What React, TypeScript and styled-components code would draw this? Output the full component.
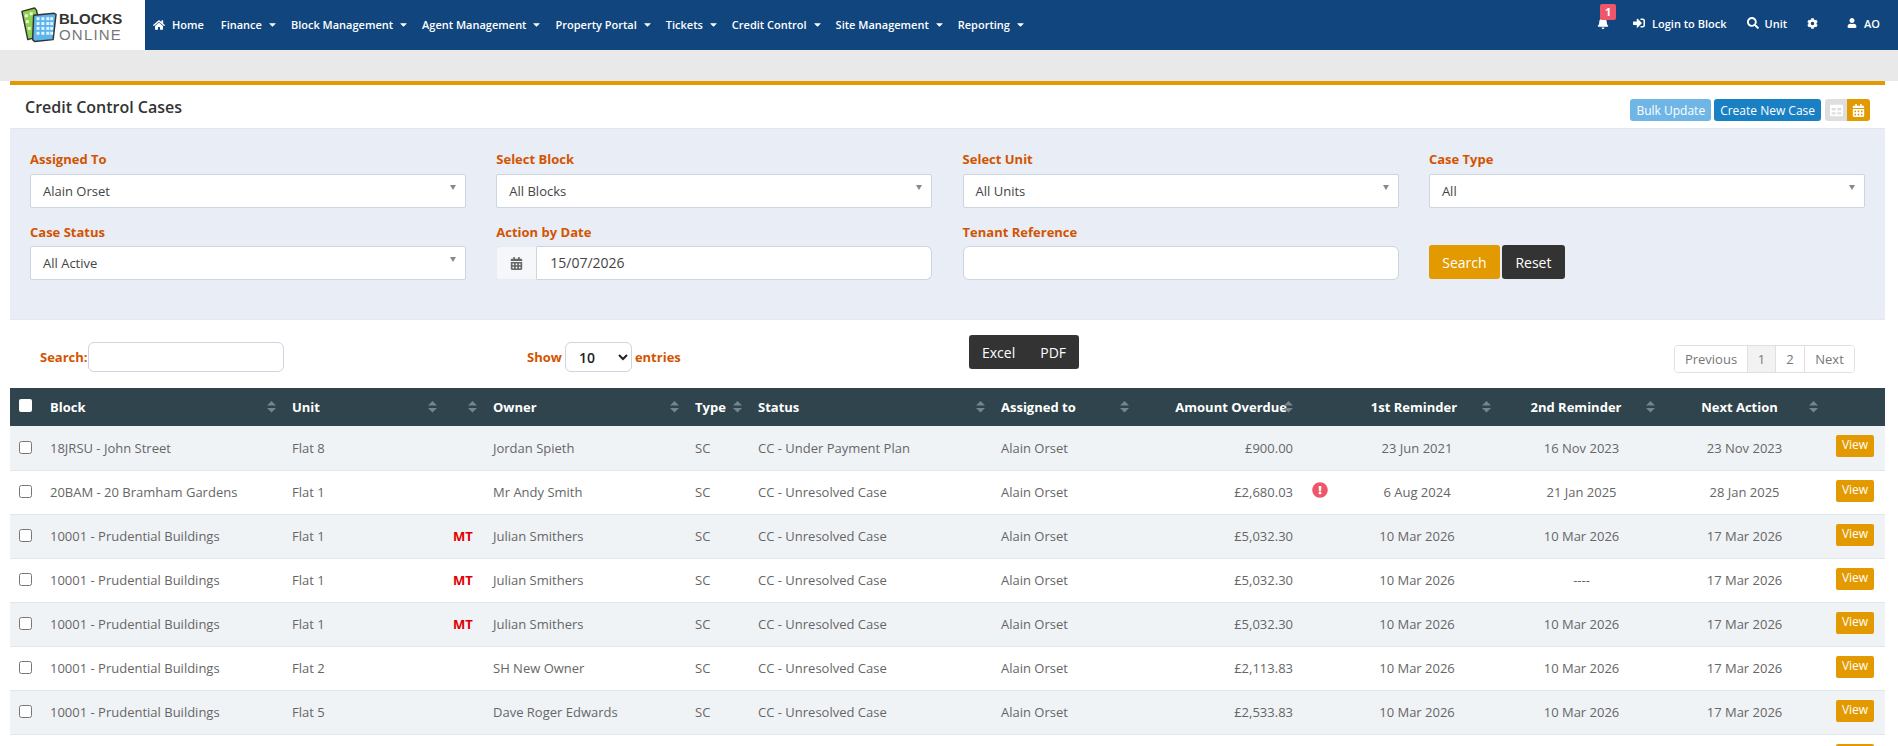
import React from "react";
import styled, { createGlobalStyle } from "styled-components";
import { FaHome, FaBell, FaSignInAlt, FaSearch, FaCog, FaUser, FaCaretDown, FaCalendarAlt, FaTable, FaExclamationCircle } from "react-icons/fa";

const Global = createGlobalStyle`
  html, body { margin: 0; padding: 0; height: 746px; overflow: hidden; background: #fff; }
  body { font-family: "Open Sans", "Noto Sans", sans-serif; font-size: 13px; color: #333; }
  * { box-sizing: border-box; }
`;

const TopBar = styled.header`
  display: flex; height: 50px; background: #10457d; color: #fff;
`;
const LogoBox = styled.div`
  width: 145px; height: 50px; background: #fff; display: flex; align-items: center; padding-left: 20px; gap: 1px; flex: none;
`;
const LogoWords = styled.div`
  display: flex; flex-direction: column; font-family: "Liberation Sans", Arial, sans-serif; color: #333; line-height: 16px; margin-top: 3px;
`;
const LogoStrong = styled.span`font-size: 15px; font-weight: 700; letter-spacing: 0;`;
const LogoLight = styled.span`font-size: 15px; font-weight: 400; letter-spacing: 1.2px; color: #777;`;
const MainNav = styled.nav`
  display: flex; align-items: center; gap: 13px; padding: 0 0 1px 8px; font-size: 11px; font-weight: 600; white-space: nowrap;
`;
const NavItem = styled.span<{ $gap?: number; $mr?: number }>`
  display: inline-flex; align-items: center; gap: ${p => p.$gap ?? 5}px; margin-right: ${p => p.$mr ?? 0}px;
`;
const SideNav = styled.div`
  margin-left: auto; display: flex; align-items: center; height: 46px; padding-right: 18px; font-size: 11px; font-weight: 600; white-space: nowrap;
`;
const SideItem = styled.span<{ $ml: number; $gap?: number }>`
  display: inline-flex; align-items: center; gap: ${p => p.$gap ?? 7}px; margin-left: ${p => p.$ml}px; position: relative;
`;
const Badge = styled.span`
  position: absolute; top: -13px; left: 3px; width: 16px; height: 16px; background: #f0566a; border-radius: 2px; font-size: 11px; font-weight: 700; text-align: center; line-height: 16px; color: #fff;
`;
const GreyBand = styled.div`height: 31px; background: #e9e9e9;`;
const Main = styled.main`
  width: 1875px; margin-left: 10px;
`;
const TitleRow = styled.div`
  height: 48px; border-top: 4px solid #e39a00; border-bottom: 1px solid #e6e6e6; display: flex; align-items: center; justify-content: space-between; padding: 0 15px; background: #fff;
`;
const Title = styled.h1`
  margin: 1px 0 0; font-size: 16px; font-weight: 600; color: #333;
`;
const TitleActions = styled.div`display: flex; align-items: center; gap: 3px; margin-top: 7px;`;
const SmallBtn = styled.button<{ $bg: string }>`
  height: 22px; border: 0; border-radius: 3px; padding: 0 6px; background: ${p => p.$bg}; color: #fff; font: 400 12px "Open Sans", sans-serif; display: inline-flex; align-items: center;
`;
const Toggle = styled.div`display: flex; margin-left: 1px; border-radius: 3px; overflow: hidden;`;
const ToggleCell = styled.span<{ $bg: string }>`
  width: ${p => p.$bg === "#e39a00" ? 23 : 22}px; height: 22px; background: ${p => p.$bg}; color: #fff; display: flex; align-items: center; justify-content: center; font-size: 13px;
`;
const FilterPanel = styled.section`
  height: 191px; background: #e9edf5; padding: 21px 20px 0 20px; border-bottom: 1px solid #e4e7ee;
  display: grid; grid-template-columns: repeat(4, 436px); column-gap: 30.3px; grid-auto-rows: 58px; row-gap: 14px;
`;
const Field = styled.div`display: flex; flex-direction: column;`;
const Label = styled.label<{ $lower?: boolean }>`
  height: 18px; line-height: 18px; margin: ${p => p.$lower ? "1px 0 5px" : "0 0 6px"}; font-size: 13px; font-weight: 700; color: #d35400;
`;
const SelectBox = styled.div`
  position: relative; height: 34px; background: #fff; border: 1px solid #ccd5e0; border-radius: 2px; padding: 0 12px; line-height: 32px; font-size: 13px; color: #444;
  &::after { content: ""; position: absolute; right: 9px; top: 10px; border: 3.5px solid transparent; border-top: 5px solid #888; border-bottom: 0; }
`;
const InputGroup = styled.div`display: flex; height: 34px;`;
const Addon = styled.span`
  width: 41px; background: #f5f7fa; border: 1px solid #e9edf3; border-right: 1px solid #ccd5e0; border-radius: 4px 0 0 4px; color: #666; display: flex; align-items: center; justify-content: center; font-size: 13px;
`;
const DateValue = styled.span`
  flex: 1; background: #fff; border: 1px solid #ccd5e0; border-left: 0; border-radius: 0 6px 6px 0; padding: 0 13px; line-height: 32px; color: #444; font-size: 14px;
`;
const TextBox = styled.input`
  height: 34px; background: #fff; border: 1px solid #ccd5e0; border-radius: 6px; outline: 0;
`;
const ActionCell = styled.div`display: flex; align-items: flex-end; gap: 2px; padding-bottom: 1px;`;
const BigBtn = styled.button<{ $bg: string; $w: number }>`
  width: ${p => p.$w}px; height: 34px; border: 0; border-radius: 3px; background: ${p => p.$bg}; color: #fff; font: 400 14px "Open Sans", sans-serif;
`;
const Toolbar = styled.div`
  height: 68px; padding: 0 30px 0 30px; display: grid; grid-template-columns: 487px 443px 1fr auto; align-items: start;
`;
const ToolSearch = styled.div`display: flex; align-items: center; margin-top: 22px; height: 30px; font-weight: 700; color: #d35400; font-size: 13px;`;
const ToolInput = styled.input`width: 196px; height: 30px; border: 1px solid #ccd5e0; border-radius: 6px; margin-left: 0; outline: 0; background: #fff;`;
const ToolShow = styled.div`display: flex; align-items: center; gap: 3px; margin-top: 22px; height: 30px; font-weight: 700; color: #d35400; font-size: 13px;`;
const ShowSelect = styled.select`
  width: 67px; height: 30px; border: 1px solid #ccd5e0; border-radius: 6px; background: #fff; color: #222; font: 600 14px "Open Sans", sans-serif; padding-left: 9px; outline: 0;
`;
const ExportGroup = styled.div`
  width: 110px; height: 34px; margin: 15px 0 0 -1px; background: #333; border-radius: 3px; color: #fff; display: flex; align-items: center; padding-left: 13px; gap: 25px; font-size: 14px;
`;
const Pager = styled.div`
  margin-top: 25px; height: 28px; display: flex; border: 1px solid #e0e0e0; border-radius: 4px; font-size: 13px; color: #777; overflow: hidden;
`;
const PageCell = styled.span<{ $w: number; $active?: boolean }>`
  width: ${p => p.$w}px; text-align: center; line-height: 26px; background: ${p => p.$active ? "#f2f2f2" : "#fff"}; border-left: 1px solid #e0e0e0;
  &:first-child { border-left: 0; }
`;
const Table = styled.table`
  width: 1875px; table-layout: fixed; border-collapse: collapse; font-size: 13px; color: #666;
`;
const Th = styled.th<{ $align?: string; $pr?: number }>`
  position: relative; height: 38px; background: #2f444c; color: #fff; font-weight: 700; text-align: ${p => p.$align || "left"}; padding: 0 ${p => p.$pr ?? 10}px 0 10px; white-space: nowrap;
`;
const SortIcon = styled.svg<{ $r: number }>`
  position: absolute; right: ${p => p.$r}px; top: 13px;
`;
const Tr = styled.tr<{ $alt: boolean }>`
  background: ${p => p.$alt ? "#f0f3f6" : "#fff"};
`;
const Td = styled.td<{ $align?: string; $pl?: number; $pr?: number }>`
  height: 44px; border-bottom: 1px solid #e3e6ea; padding: 0 ${p => p.$pr ?? 10}px 0 ${p => p.$pl ?? 10}px; text-align: ${p => p.$align || "left"}; white-space: nowrap; overflow: visible;
`;
const TdTop = styled.td`
  height: 44px; border-bottom: 1px solid #e3e6ea; padding: 9px 0 0 12px; vertical-align: top;
`;
const ViewBtn = styled.button`
  display: block; width: 38px; height: 22px; border: 0; border-radius: 2px; padding: 0 0 3px; background: #e39a00; color: #fff; font: 400 12px "Open Sans", sans-serif;
`;
const Check = styled.input`
  width: 13px; height: 13px; margin: 0 0 1px -1px; display: block;
`;
const HeadCheck = styled.span`
  display: block; width: 13px; height: 13px; background: #fff; border-radius: 2px; margin: 0 0 3px -1px;
`;
const Mt = styled.span`color: #e00000; font-weight: 700;`;
const Alert = styled.span`color: #f0566a; display: block; font-size: 16px; line-height: 0; margin: -4px 0 0 0;`;
const Col = styled.col<{ $w: number }>`width: ${p => p.$w}px;`;

const Sort = ({ r = 6 }: { r?: number }) => (
  <SortIcon $r={r} width="9" height="12" viewBox="0 0 9 12" fill="#76858b">
    <path d="M4.5 0 9 4.5H0z" />
    <path d="M0 7h9l-4.5 4.5z" />
  </SortIcon>
);

const Logo = () => (
  <svg width="38" height="38" viewBox="0 0 39 38">
    <path d="M2 5 15 1.500 17 4 22 30 8 34 Z" fill="#8fd14f" stroke="#333" strokeWidth="1.500" strokeLinejoin="round" />
    <g fill="#eaf7d8">
      <rect x="5" y="8" width="3" height="3" /><rect x="10" y="6" width="3" height="3" />
      <rect x="6" y="14" width="3" height="3" /><rect x="8" y="21" width="3" height="3" />
    </g>
    <path d="M14 9 35 7 37 8 34 34 15 36 13 34Z" fill="#5db5ee" stroke="#333" strokeWidth="1.500" strokeLinejoin="round" />
    <g fill="#e4f4ff">
      {[11, 16, 21, 26].map(y => [17, 22, 27, 31].map(x => (
        <rect key={`${x}-${y}`} x={x} y={y} width="3" height="3" />
      )))}
    </g>
  </svg>
);

const navItems = ["Finance", "Block Management", "Agent Management", "Property Portal", "Tickets", "Credit Control", "Site Management", "Reporting"];

type Row = [string, string, boolean, string, string, string, string, boolean, string, string, string];
const rows: Row[] = [
  ["18JRSU - John Street", "Flat 8", false, "Jordan Spieth", "SC", "CC - Under Payment Plan", "£900.00", false, "23 Jun 2021", "16 Nov 2023", "23 Nov 2023"],
  ["20BAM - 20 Bramham Gardens", "Flat 1", false, "Mr Andy Smith", "SC", "CC - Unresolved Case", "£2,680.03", true, "6 Aug 2024", "21 Jan 2025", "28 Jan 2025"],
  ["10001 - Prudential Buildings", "Flat 1", true, "Julian Smithers", "SC", "CC - Unresolved Case", "£5,032.30", false, "10 Mar 2026", "10 Mar 2026", "17 Mar 2026"],
  ["10001 - Prudential Buildings", "Flat 1", true, "Julian Smithers", "SC", "CC - Unresolved Case", "£5,032.30", false, "10 Mar 2026", "----", "17 Mar 2026"],
  ["10001 - Prudential Buildings", "Flat 1", true, "Julian Smithers", "SC", "CC - Unresolved Case", "£5,032.30", false, "10 Mar 2026", "10 Mar 2026", "17 Mar 2026"],
  ["10001 - Prudential Buildings", "Flat 2", false, "SH New Owner", "SC", "CC - Unresolved Case", "£2,113.83", false, "10 Mar 2026", "10 Mar 2026", "17 Mar 2026"],
  ["10001 - Prudential Buildings", "Flat 5", false, "Dave Roger Edwards", "SC", "CC - Unresolved Case", "£2,533.83", false, "10 Mar 2026", "10 Mar 2026", "17 Mar 2026"],
];
const widths = [30, 242, 161, 40, 202, 63, 243, 144, 167, 35, 160, 164, 163, 61];

export default function App() {
  return (
    <>
      <Global />
      <TopBar>
        <LogoBox>
          <Logo />
          <LogoWords>
            <LogoStrong>BLOCKS</LogoStrong>
            <LogoLight>ONLINE</LogoLight>
          </LogoWords>
        </LogoBox>
        <MainNav>
          <NavItem $gap={7} $mr={4}><FaHome size={12} />Home</NavItem>
          {navItems.map(n => <NavItem key={n}>{n}<FaCaretDown size={11} /></NavItem>)}
        </MainNav>
        <SideNav>
          <SideItem $ml={0}><FaBell size={12} /><Badge>1</Badge></SideItem>
          <SideItem $ml={24}><FaSignInAlt size={12} />Login to Block</SideItem>
          <SideItem $ml={21} $gap={5}><FaSearch size={12} />Unit</SideItem>
          <SideItem $ml={20}><FaCog size={11} /></SideItem>
          <SideItem $ml={29}><FaUser size={10} />AO</SideItem>
        </SideNav>
      </TopBar>
      <GreyBand />
      <Main>
        <TitleRow>
          <Title>Credit Control Cases</Title>
          <TitleActions>
            <SmallBtn $bg="#6fb6e6">Bulk Update</SmallBtn>
            <SmallBtn $bg="#1a80c4">Create New Case</SmallBtn>
            <Toggle>
              <ToggleCell $bg="#dedede"><FaTable /></ToggleCell>
              <ToggleCell $bg="#e39a00"><FaCalendarAlt /></ToggleCell>
            </Toggle>
          </TitleActions>
        </TitleRow>
        <FilterPanel>
          <Field><Label>Assigned To</Label><SelectBox>Alain Orset</SelectBox></Field>
          <Field><Label>Select Block</Label><SelectBox>All Blocks</SelectBox></Field>
          <Field><Label>Select Unit</Label><SelectBox>All Units</SelectBox></Field>
          <Field><Label>Case Type</Label><SelectBox>All</SelectBox></Field>
          <Field><Label $lower>Case Status</Label><SelectBox>All Active</SelectBox></Field>
          <Field>
            <Label $lower>Action by Date</Label>
            <InputGroup><Addon><FaCalendarAlt /></Addon><DateValue>15/07/2026</DateValue></InputGroup>
          </Field>
          <Field><Label $lower>Tenant Reference</Label><TextBox /></Field>
          <ActionCell>
            <BigBtn $bg="#e39a00" $w={71}>Search</BigBtn>
            <BigBtn $bg="#333" $w={63}>Reset</BigBtn>
          </ActionCell>
        </FilterPanel>
        <Toolbar>
          <ToolSearch>Search:<ToolInput /></ToolSearch>
          <ToolShow>Show <ShowSelect defaultValue="10"><option>10</option></ShowSelect> entries</ToolShow>
          <div><ExportGroup><span>Excel</span><span>PDF</span></ExportGroup></div>
          <Pager>
            <PageCell $w={72}>Previous</PageCell>
            <PageCell $w={28} $active>1</PageCell>
            <PageCell $w={29}>2</PageCell>
            <PageCell $w={50}>Next</PageCell>
          </Pager>
        </Toolbar>
        <Table>
          <colgroup>{widths.map((w, i) => <Col key={i} $w={w} />)}</colgroup>
          <thead>
            <tr>
              <Th><HeadCheck /></Th>
              <Th>Block<Sort /></Th>
              <Th>Unit<Sort /></Th>
              <Th><Sort /></Th>
              <Th>Owner<Sort /></Th>
              <Th>Type<Sort /></Th>
              <Th>Status<Sort /></Th>
              <Th>Assigned to<Sort /></Th>
              <Th $align="right" $pr={15}>Amount Overdue<Sort r={9} /></Th>
              <Th />
              <Th $align="center" $pr={16}>1st Reminder<Sort /></Th>
              <Th $align="center" $pr={16}>2nd Reminder<Sort /></Th>
              <Th $align="center" $pr={16}>Next Action<Sort /></Th>
              <Th />
            </tr>
          </thead>
          <tbody>
            {rows.map((r, i) => (
              <Tr key={i} $alt={i % 2 === 0}>
                <Td><Check type="checkbox" /></Td>
                <Td>{r[0]}</Td>
                <Td>{r[1]}</Td>
                <Td>{r[2] && <Mt>MT</Mt>}</Td>
                <Td>{r[3]}</Td>
                <Td>{r[4]}</Td>
                <Td>{r[5]}</Td>
                <Td>Alain Orset</Td>
                <Td $align="right" $pr={9}>{r[6]}</Td>
                <Td>{r[7] && <Alert><FaExclamationCircle /></Alert>}</Td>
                <Td $align="center">{r[8]}</Td>
                <Td $align="center" $pl={15}>{r[9]}</Td>
                <Td $align="center" $pl={14}>{r[10]}</Td>
                <TdTop><ViewBtn>View</ViewBtn></TdTop>
              </Tr>
            ))}
            <Tr $alt={false}>
              <Td colSpan={13} />
              <TdTop><ViewBtn>View</ViewBtn></TdTop>
            </Tr>
          </tbody>
        </Table>
      </Main>
    </>
  );
}
